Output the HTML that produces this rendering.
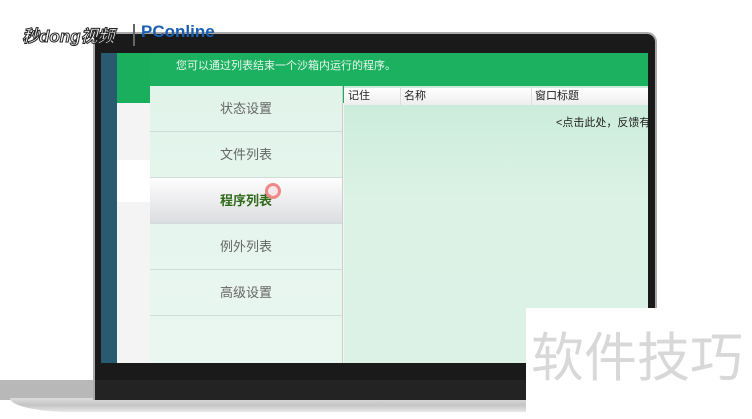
<!DOCTYPE html>
<html><head><meta charset="utf-8"><style>
*{margin:0;padding:0;box-sizing:border-box}
body{width:752px;height:419px;background:#fff;position:relative;overflow:hidden;font-family:"Liberation Sans","Noto Sans CJK SC",sans-serif}
.a{position:absolute}
.menu div{height:46px;border-bottom:1px solid #d2dcd6;text-align:center;line-height:46px;font-size:13px;color:#666}
</style></head><body>
<div class="a" style="left:0;top:380px;width:752px;height:20px;background:#b8b8b8"></div>
<div class="a" style="left:10px;top:398px;width:742px;height:14px;background:linear-gradient(#ddd,#c4c4c4 50%,#e8e8e8);border-radius:0 0 0 60px/0 0 0 14px"></div>
<div class="a" style="left:93px;top:32px;width:564px;height:368px;background:#1a1a1a;border-radius:0 10px 0 0;border:2px solid #aaa;border-bottom:none"></div>
<div class="a" style="left:95px;top:380px;width:560px;height:20px;background:#232323"></div>
<div class="a" style="left:101px;top:53px;width:16px;height:310px;background:#2a5a70"></div>
<div class="a" style="left:117px;top:53px;width:531px;height:310px;background:#f4f4f4"></div>
<div class="a" style="left:117px;top:53px;width:531px;height:50px;background:#1aaf5d"></div>
<div class="a" style="left:117px;top:160px;width:33px;height:42px;background:#fff"></div>
<div class="a" style="left:150px;top:53px;width:498px;height:33px;background:#1bb160;color:#e8f7ee;font-size:11px;line-height:26px;padding-left:26px">您可以通过列表结束一个沙箱内运行的程序。</div>
<div class="a menu" style="left:150px;top:86px;width:193px;height:277px;background:linear-gradient(#e1f4ea,#eaf7f1);border-right:1px solid #c8d0cc">
<div>状态设置</div><div>文件列表</div>
<div style="background:linear-gradient(#fdfdfd,#dcdde0);color:#2e6a18;font-weight:bold">程序列表</div>
<div>例外列表</div><div>高级设置</div>
</div>
<div class="a" style="left:265px;top:183px;width:16px;height:16px;border-radius:50%;border:3px solid #e88;background:rgba(255,200,200,.3)"></div>
<div class="a" style="left:344px;top:86px;width:304px;height:277px;background:linear-gradient(#c9ebd9,#dbf2e5 40%,#dcf2e6)"></div>
<div class="a" style="left:344px;top:88px;width:304px;height:17px;background:linear-gradient(#fff,#eee);font-size:11px;color:#222;line-height:17px">
<span class="a" style="left:4px">记住</span><span class="a" style="left:56px;border-left:1px solid #ddd;padding-left:3px">名称</span><span class="a" style="left:187px;border-left:1px solid #ddd;padding-left:3px">窗口标题</span></div>
<div class="a" style="left:556px;top:114px;font-size:11px;color:#222;white-space:nowrap;width:92px;overflow:hidden">&lt;点击此处，反馈有</div>
<div class="a" style="left:22px;top:22px;font-size:17px;font-weight:bold;font-style:italic;color:#fff;-webkit-text-stroke:1px #222">秒dong视频</div>
<div class="a" style="left:133px;top:24px;width:2px;height:22px;background:#666"></div>
<div class="a" style="left:141px;top:22px;font-size:17px;font-weight:bold;color:#1a5fb4">PConline</div>
<div class="a" style="left:526px;top:308px;width:226px;height:111px;background:#fff;color:#d8d8d8;font-size:53px;line-height:1;padding:24px 0 0 5px;white-space:nowrap;overflow:hidden">软件技巧</div>
</body></html>
